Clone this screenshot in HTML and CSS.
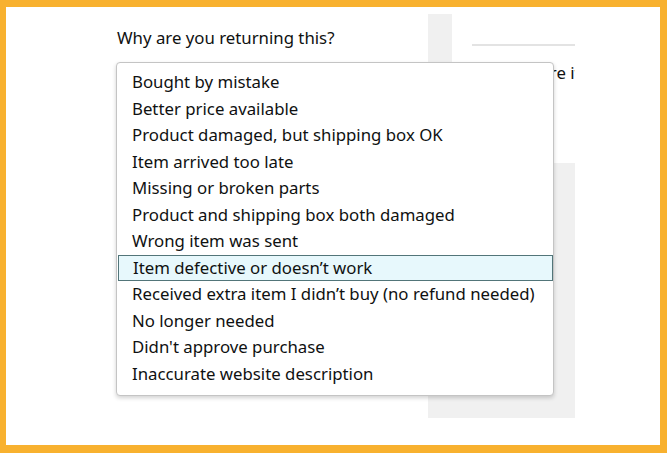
FILE: index.html
```html
<!DOCTYPE html>
<html lang="en">
<head>
<meta charset="utf-8">
<title>Return reason</title>
<link rel="stylesheet" href="styles.css">
</head>
<body>
<div class="frame">
  <div class="page">
    <div class="form-col">
      <div class="question">Why are you returning this?</div>
    </div>
    <div class="side-panel">
      <div class="side-card">
        <div class="side-rule"></div>
        <div class="side-text">Make sure items</div>
      </div>
    </div>
    <ul class="menu">
      <li class="option">Bought by mistake</li>
      <li class="option">Better price available</li>
      <li class="option">Product damaged, but shipping box OK</li>
      <li class="option">Item arrived too late</li>
      <li class="option">Missing or broken parts</li>
      <li class="option">Product and shipping box both damaged</li>
      <li class="option">Wrong item was sent</li>
      <li class="option option-active">Item defective or doesn’t work</li>
      <li class="option">Received extra item I didn’t buy (no refund needed)</li>
      <li class="option">No longer needed</li>
      <li class="option">Didn't approve purchase</li>
      <li class="option">Inaccurate website description</li>
    </ul>
  </div>
</div>
</body>
</html>
```

FILE: styles.css
```css
* { box-sizing: border-box; }
html, body { margin: 0; padding: 0; }
body {
  width: 667px;
  height: 453px;
  background: #f8b12f;
  font-family: "Noto Sans", "Open Sans", sans-serif;
  color: #0f1111;
}
.frame {
  padding: 7px 7px 8px 6px;
  height: 453px;
}
.page {
  position: relative;
  background: #ffffff;
  height: 438px;
  display: flex;
  align-items: flex-start;
}
.form-col {
  width: 422px;
  padding: 19px 0 0 111px;
}
.question {
  font-size: 16.8px;
  line-height: 24px;
}
.side-panel {
  margin-top: 7px;
  width: 147px;
  height: 404px;
  background: #f0f0f0;
  padding-left: 24px;
}
.side-card {
  background: #ffffff;
  height: 149px;
  padding: 30px 0 0 20px;
  overflow: hidden;
}
.side-rule {
  height: 2px;
  background: #e3e3e3;
}
.side-text {
  margin: 16px 0 0 12px;
  font-size: 16.8px;
  line-height: 22px;
  white-space: nowrap;
}
.menu {
  position: absolute;
  left: 110px;
  top: 55px;
  width: 438px;
  margin: 0;
  padding: 6px 0 8px;
  list-style: none;
  background: #ffffff;
  border: 1px solid #c4c4c4;
  border-radius: 4px;
  box-shadow: 0 2px 4px rgba(0, 0, 0, 0.18);
}
.option {
  font-size: 16.8px;
  line-height: 26.5px;
  height: 26.5px;
  padding-left: 14px;
  white-space: nowrap;
  border: 1px solid transparent;
  display: flex;
  align-items: center;
}
.option-active {
  background: #e7f8fc;
  border-color: #527579;
  margin: 0 0 0 1px;
}
```
